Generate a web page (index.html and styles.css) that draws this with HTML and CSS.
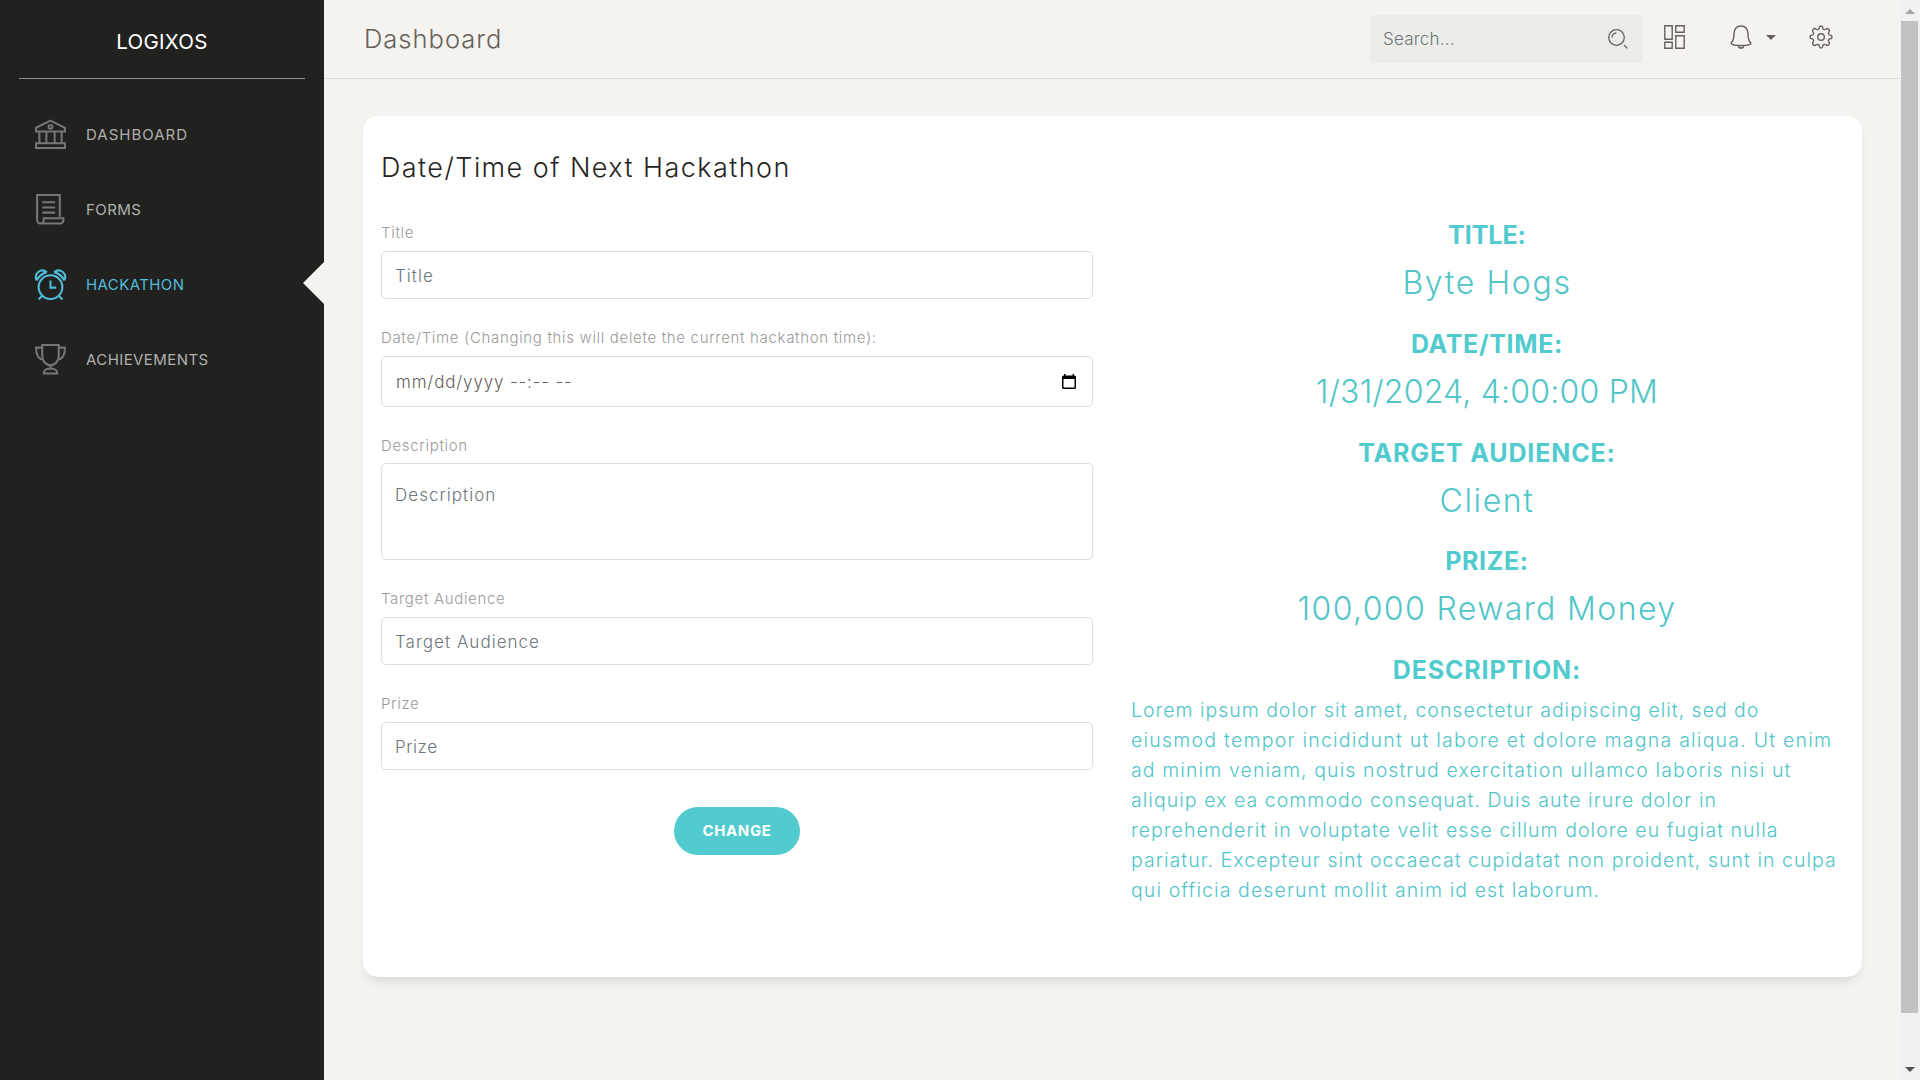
FILE: index.html
```html
<!DOCTYPE html>
<html lang="en">
<head>
<meta charset="utf-8">
<title>Logixos Dashboard</title>
<link rel="stylesheet" href="styles.css">
</head>
<body>
<div class="app">
  <aside class="sidebar">
    <div class="brand">LOGIXOS</div>
    <nav class="menu">
      <a class="menu-item">
        <svg class="menu-icon" viewBox="0 0 32 32"><path d="M2 9.500 16 2.500l14 7V13H2zM5.200 13v11M12 13v11M20 13v11M26.800 13v11M2 24.500h28v4.500H2z"/><circle cx="16" cy="8.600" r="1.900"/></svg>
        <span class="t-dashboard">DASHBOARD</span>
      </a>
      <a class="menu-item">
        <svg class="menu-icon" viewBox="0 0 32 32"><path d="M25 23V2H3v24.500A3 3 0 0 0 6 29.500h19.500a3 3 0 0 0 3-3V24.500H9.500V26.500a3 3 0 0 1-3 3M8 9h12.500M8 14h12.500M8 19h12.500"/></svg>
        <span>FORMS</span>
      </a>
      <a class="menu-item active">
        <svg class="menu-icon" viewBox="0 0 32 32"><circle cx="16" cy="18.500" r="11.500"/><path d="M16 12v7h5.500M7.700 27 4.500 30.500M24.300 27l3.200 3.500M2.500 12C-.5 5.500 6.500-.5 12.500 4M2.500 12C4.500 8.500 8.500 5 12.500 4M29.500 12C32.500 5.500 25.500-.5 19.500 4M29.500 12C27.500 8.500 23.500 5 19.500 4"/></svg>
        <span>HACKATHON</span>
      </a>
      <a class="menu-item">
        <svg class="menu-icon" viewBox="0 0 32 32"><path d="M8 2h16v10.500c0 5-3.500 9-8 9s-8-4-8-9zM8 4.500H2c0 7 2 11 7 11.500M24 4.500h6c0 7-2 11-7 11.500M16 21.500V25M9.500 29.500c0-2.500 2-4.500 4.500-4.500h4c2.500 0 4.500 2 4.500 4.500z"/></svg>
        <span>ACHIEVEMENTS</span>
      </a>
    </nav>
  </aside>

  <main class="main">
    <header class="topbar">
      <h1 class="page-title">Dashboard</h1>
      <div class="search">
        <span class="search-text">Search...</span>
        <svg class="search-icon" viewBox="0 0 20 20"><circle cx="8.500" cy="8.500" r="7.800"/><path d="M4 8.500A4.500 4.500 0 0 1 8.500 4M16 16l3.300 3.300"/></svg>
      </div>
      <svg class="grid-icon" viewBox="0 0 21 24"><path d="M.8.8h7.400v13.400H.8zM11.800.8h8.400v6.400h-8.400zM.8 17.300h7.400v5.900H.8zM11.800 10.800h8.400v12.400h-8.400z"/></svg>
      <svg class="bell-icon" viewBox="0 0 22 24"><path d="M11 1C6.500 1 4 4.500 4 8.500c0 5.500-1 8-3 9.500 0 1.500 4 2.500 10 2.500s10-1 10-2.500c-2-1.500-3-4-3-9.500C18 4.500 15.500 1 11 1zM8 20.500c.3 1.600 1.400 2.500 3 2.500s2.700-.9 3-2.500"/></svg>
      <span class="caret"></span>
      <svg class="gear-icon" viewBox="0 0 24 24"><circle cx="12" cy="12" r="3.300"/><path d="M9.500 4.300Q10.300 3.800 10.300 2.500 10.500 1 12 1T13.700 2.500Q13.700 3.800 14.500 4.300 15.800 5 16.800 4.200 18.300 2.800 19.700 4.300 21.200 5.700 19.800 7.200 19 8.200 19.700 9.500 20.200 10.300 21.500 10.300 23 10.500 23 12T21.500 13.700Q20.200 13.700 19.700 14.500 19 15.800 19.800 16.800 21.200 18.300 19.700 19.700 18.300 21.200 16.800 19.800 15.800 19 14.500 19.700 13.700 20.200 13.700 21.500 13.500 23 12 23T10.300 21.500Q10.300 20.200 9.500 19.700 8.200 19 7.200 19.800 5.700 21.200 4.300 19.700 2.800 18.300 4.200 16.800 5 15.800 4.300 14.500 3.800 13.700 2.500 13.700 1 13.500 1 12T2.500 10.300Q3.800 10.300 4.300 9.500 5 8.200 4.200 7.200 2.800 5.700 4.300 4.300 5.700 2.800 7.200 4.200 8.200 5 9.500 4.300z"/></svg>
    </header>

    <section class="card">
      <h2 class="card-title">Date/Time of Next Hackathon</h2>
      <div class="columns">
        <form class="form">
          <div class="group">
            <label class="label">Title</label>
            <div class="field">Title</div>
          </div>
          <div class="group">
            <label class="label">Date/Time (Changing this will delete the current hackathon time):</label>
            <div class="field field-date"><span>mm/dd/yyyy --:-- --</span>
              <svg class="calendar" viewBox="0 0 14 15"><path fill-rule="evenodd" d="M1.500 1.500H2V0h1.500v1.500h7V0H12v1.500h.5A1.500 1.500 0 0 1 14 3v10.500a1.500 1.500 0 0 1-1.500 1.500h-11A1.500 1.500 0 0 1 0 13.500V3a1.500 1.500 0 0 1 1.500-1.500zM1.500 5v8.500h11V5z"/></svg>
            </div>
          </div>
          <div class="group">
            <label class="label label-tight">Description</label>
            <div class="field field-area">Description</div>
          </div>
          <div class="group">
            <label class="label">Target Audience</label>
            <div class="field">Target Audience</div>
          </div>
          <div class="group">
            <label class="label">Prize</label>
            <div class="field t-prize">Prize</div>
          </div>
          <button class="submit" type="button">CHANGE</button>
        </form>

        <div class="details">
          <div class="detail"><h3 class="detail-name t-title">TITLE:</h3><p class="detail-value">Byte Hogs</p></div>
          <div class="detail"><h3 class="detail-name">DATE/TIME:</h3><p class="detail-value t-date">1/31/2024, 4:00:00 PM</p></div>
          <div class="detail"><h3 class="detail-name t-wide">TARGET AUDIENCE:</h3><p class="detail-value">Client</p></div>
          <div class="detail"><h3 class="detail-name">PRIZE:</h3><p class="detail-value t-reward">100,000 Reward Money</p></div>
          <h3 class="detail-name t-wide">DESCRIPTION:</h3>
          <p class="description"><span class="t-line1">Lorem ipsum dolor sit amet, consectetur adipiscing elit, sed do</span><br><span class="t-line2">eiusmod tempor incididunt ut labore et dolore magna aliqua. Ut enim</span><br><span class="t-line3">ad minim veniam, quis nostrud exercitation ullamco laboris nisi ut</span><br>aliquip ex ea commodo consequat. Duis aute irure dolor in<br>reprehenderit in voluptate velit esse cillum dolore eu fugiat nulla<br>pariatur. Excepteur sint occaecat cupidatat non proident, sunt in culpa<br><span class="t-line3">qui officia deserunt mollit anim id est laborum.</span></p>
        </div>
      </div>
    </section>
  </main>

  <div class="scrollbar">
    <span class="scroll-up"></span>
    <span class="scroll-thumb"></span>
    <span class="scroll-down"></span>
  </div>
</div>
</body>
</html>
```
FILE: styles.css
```css
* { box-sizing: border-box; }

body {
  margin: 0;
  font-family: "Inter", "Open Sans", sans-serif;
  font-weight: 300;
  color: #252422;
  background: #f4f3ef;
}

h1, h2, h3, p { margin: 0; font-weight: inherit; }

svg { display: block; fill: none; stroke: currentColor; flex: none; }

.app { display: flex; height: 1080px; overflow: hidden; }

/* Sidebar */
.sidebar {
  width: 324px;
  flex: none;
  background: #212120;
  color: #b0b0af;
}

.brand {
  height: 79px;
  margin: 0 19px;
  padding-top: 27px;
  border-bottom: 1px solid #8d8d8c;
  color: #fff;
  font-size: 20.500px;
  font-weight: 400;
  line-height: 30px;
  letter-spacing: .25px;
  text-align: center;
}

.menu { padding-top: 18px; }

.menu-item {
  position: relative;
  display: flex;
  align-items: center;
  gap: 19px;
  height: 75px;
  padding-left: 34px;
  font-size: 15px;
  font-weight: 400;
  letter-spacing: .42px;
}

.menu-icon { width: 33px; height: 33px; color: #767675; stroke-width: 2; }

.active, .active .menu-icon { color: #51bcda; }

.active::after {
  content: "";
  position: absolute;
  right: 0;
  top: 15px;
  border: 21px solid transparent;
  border-left: 0;
  border-right-color: #f4f3ef;
}

.t-dashboard { letter-spacing: 1px; }

/* Top bar */
.main { flex: 1; min-width: 0; }

.topbar {
  display: flex;
  align-items: flex-start;
  height: 79px;
  padding-left: 40px;
  border-bottom: 1px solid #dddcd9;
  color: #66615b;
}

.page-title {
  margin: 22px auto 0 0;
  font-size: 25.500px;
  line-height: 34px;
  letter-spacing: 1px;
}

.search {
  display: flex;
  align-items: center;
  justify-content: space-between;
  width: 273px;
  height: 48px;
  margin: 15px 21px 0 0;
  padding: 0 15px 0 13px;
  border-radius: 4px;
  background: #ecede8;
}

.search-text { font-size: 17px; letter-spacing: .2px; color: #6c757d; }
.search-icon { width: 20px; height: 20px; stroke-width: 1.300; }
.grid-icon { width: 21px; height: 24px; margin: 25px 45px 0 0; stroke-width: 1.400; }
.bell-icon { width: 22px; height: 24px; margin: 25px 14px 0 0; stroke-width: 1.400; }
.caret { margin: 35px 33px 0 0; border: 5px solid transparent; border-top-color: currentColor; border-bottom: 0; }
.gear-icon { width: 24px; height: 24px; margin: 25px 67px 0 0; stroke-width: 1.400; }

/* Card */
.card {
  width: 1499px;
  height: 861px;
  margin: 37px 0 0 39px;
  padding: 21px 19px 0 18px;
  border-radius: 15px;
  background: #fff;
  box-shadow: 0 7px 12px -5px rgba(0, 0, 0, .15);
}

.card-title {
  height: 78px;
  font-size: 27px;
  line-height: 62px;
  letter-spacing: 1.430px;
}

.columns { display: grid; grid-template-columns: 712px 712px; gap: 38px; }

/* Form */
.form { display: flex; flex-direction: column; gap: 21px; }

.label {
  display: block;
  height: 36px;
  color: #9a9a9a;
  font-size: 15px;
  line-height: 35px;
  letter-spacing: .67px;
}

.label-tight { height: 35px; }

.field {
  height: 48px;
  padding: 0 13px;
  border: 1px solid #dddddd;
  border-radius: 5px;
  color: #6c757d;
  font-size: 17px;
  line-height: 48px;
  letter-spacing: 1.030px;
}

.field-date {
  display: flex;
  align-items: center;
  justify-content: space-between;
  height: 51px;
  padding-left: 14px;
  padding-right: 16px;
  color: #66615b;
  line-height: 50px;
  letter-spacing: .85px;
}

.field-area { height: 97px; padding-top: 7px; }
.t-prize { letter-spacing: .56px; }

.calendar { width: 14px; height: 15px; fill: #000; stroke: none; }

.submit {
  align-self: center;
  width: 126px;
  height: 48px;
  margin-top: 16px;
  padding: 0;
  border: 0;
  border-radius: 24px;
  background: #51cbce;
  color: #fff;
  font: 700 15px/48px "Inter", "Open Sans", sans-serif;
  letter-spacing: .6px;
}

/* Current hackathon details */
.details { color: #51c5c8; text-align: center; }
.detail { height: 108.750px; }

.detail-name {
  color: #51cbce;
  font-size: 25px;
  font-weight: 700;
  line-height: 40px;
  letter-spacing: .65px;
}

.detail-value { font-size: 32px; line-height: 56px; letter-spacing: 1.650px; }

.description {
  margin-top: 5px;
  font-size: 19.500px;
  line-height: 30px;
  letter-spacing: 1.040px;
  text-align: left;
  white-space: nowrap;
}

.t-title { letter-spacing: -.05px; }
.t-wide { letter-spacing: .85px; }
.t-date { letter-spacing: .22px; }
.t-reward { letter-spacing: 1.400px; }
.t-line1 { letter-spacing: .980px; }
.t-line2 { letter-spacing: 1.230px; }
.t-line3 { letter-spacing: 1.100px; }

/* Scrollbar */
.scrollbar {
  display: flex;
  flex-direction: column;
  align-items: center;
  width: 20px;
  padding: 9px 1px 8px 0;
  background: #f1f1f1;
}

.scroll-up, .scroll-down { border: 5px solid transparent; }
.scroll-up { border-top: 0; border-bottom-color: #a3a3a3; }
.scroll-down { margin-top: auto; border-bottom: 0; border-top-color: #505050; }
.scroll-thumb { width: 17px; height: 992px; margin-top: 7px; background: #c1c1c1; }
```
